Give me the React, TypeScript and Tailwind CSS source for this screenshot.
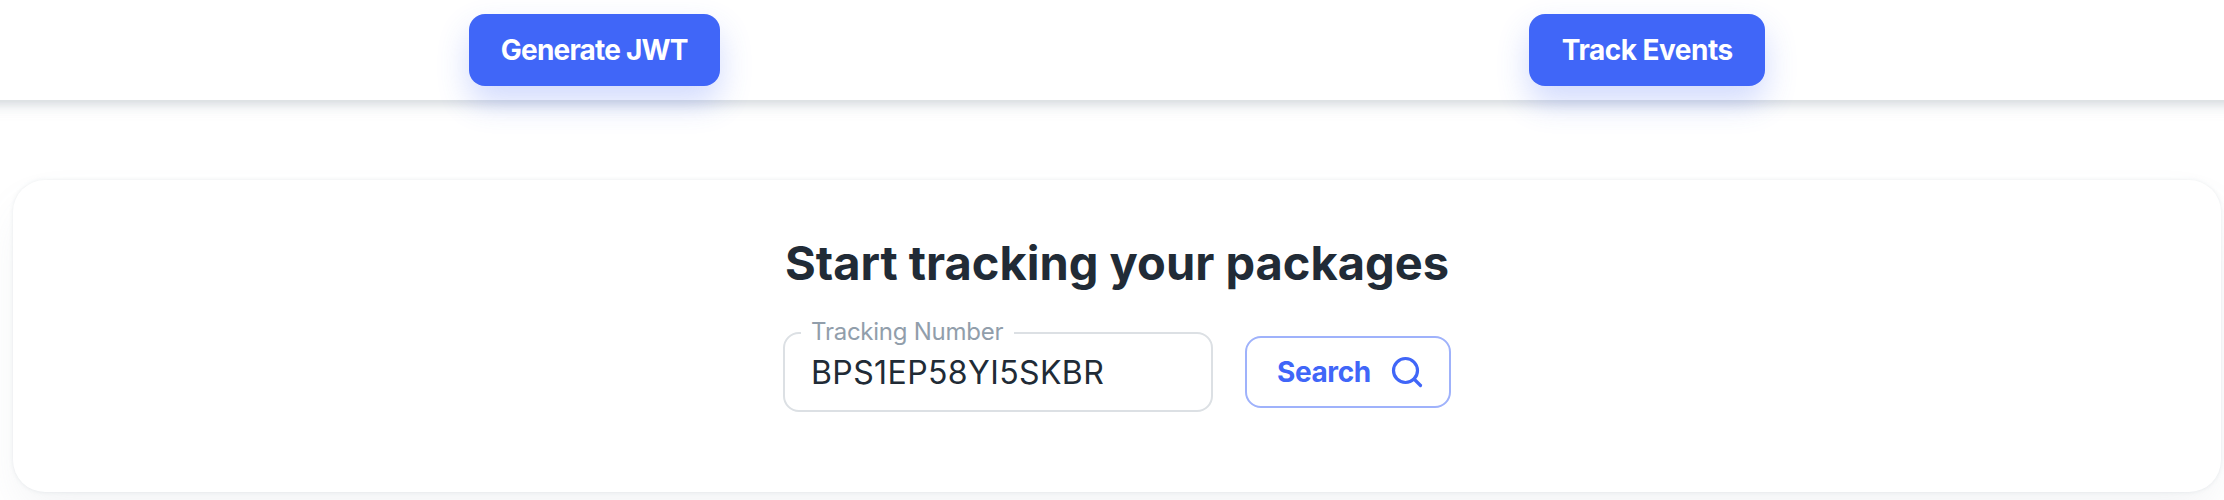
import React from "react";

function ActionButton({ children, className }: { children: React.ReactNode; className: string }) {
  return (
    <button
      className={`flex h-[72px] items-center justify-center rounded-2xl bg-[#4066f8] text-[28px] font-bold text-white shadow-[0_16px_32px_0_rgba(64,102,248,0.24)] ${className}`}
    >
      {children}
    </button>
  );
}

function SearchIcon() {
  return (
    <svg width="40" height="40" viewBox="0 0 40 40" fill="none" stroke="currentColor" strokeWidth="3.2">
      <circle cx="21.5" cy="18.5" r="12" />
      <path d="M30 27l6.5 6.5" strokeLinecap="round" />
    </svg>
  );
}

export default function App() {
  return (
    <div className="h-[500px] overflow-hidden bg-white font-['Inter','Liberation_Sans',sans-serif] text-[#212b36]">
      <header className="-mx-10 flex h-[100px] items-center justify-around bg-white pr-[94px] pl-[104px] shadow-[0_4px_8px_-2px_rgba(145,158,171,0.2),0_8px_10px_0_rgba(145,158,171,0.14),0_2px_20px_0_rgba(145,158,171,0.12)]">
        <ActionButton className="w-[251px] tracking-[-0.8px]">Generate JWT</ActionButton>
        <ActionButton className="w-[236px] tracking-[-0.5px]">Track Events</ActionButton>
      </header>
      <main className="pt-20 pr-[3px] pl-[13px]">
        <section className="flex h-[312px] flex-col items-center rounded-[32px] bg-white pt-[48px] shadow-[0_0_4px_0_rgba(145,158,171,0.2),0_24px_48px_-8px_rgba(145,158,171,0.12)]">
          <h1 className="h-[72px] text-[47px] leading-[70px] font-bold whitespace-nowrap">
            Start tracking your packages
          </h1>
          <div className="mt-[14px] flex h-[98px] items-end gap-8">
            <fieldset className="h-[97px] w-[430px] rounded-2xl border-2 border-[#dce0e4] pl-4">
              <legend className="h-9 w-[213px] px-[10px] text-[24px] leading-[34px] tracking-[-0.25px] whitespace-nowrap text-[#919eab]">Tracking Number</legend>
              <input
                aria-label="Tracking Number"
                defaultValue="BPS1EP58YI5SKBR"
                className="block h-11 w-[380px] bg-transparent pl-[10px] text-[32px] leading-[44px] tracking-[0.4px] outline-none"
              />
            </fieldset>
            <button className="mb-1 flex h-[72px] w-[206px] items-center rounded-2xl border-2 border-[#9fb2fb] pl-[30px] text-[28px] font-bold text-[#4066f8]">
              <span className="w-[107px] text-left tracking-[-0.4px]">Search</span>
              <SearchIcon />
            </button>
          </div>
        </section>
      </main>
    </div>
  );
}
